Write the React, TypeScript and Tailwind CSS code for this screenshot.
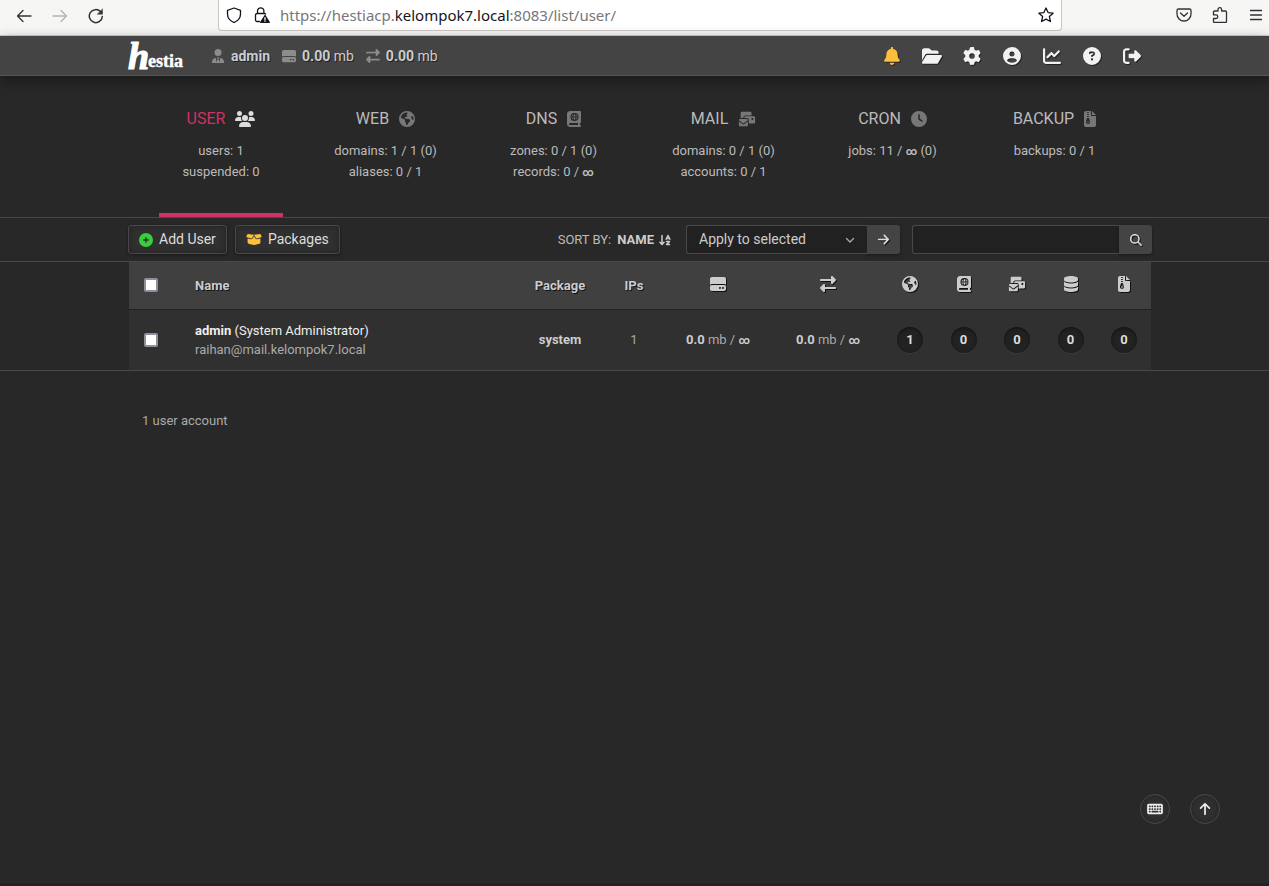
import type { ReactNode } from 'react';
import {
  FaArrowDownAZ, FaArrowRight, FaArrowUp, FaBell, FaBookAtlas, FaBoxOpen, FaChartLine,
  FaCirclePlus, FaCircleQuestion, FaCircleUser, FaClock, FaDatabase, FaEarthAmericas,
  FaEnvelopesBulk, FaFileZipper, FaFolderOpen, FaGear, FaHardDrive, FaKeyboard,
  FaMagnifyingGlass, FaRightFromBracket, FaRightLeft, FaUserTie, FaUsers,
} from 'react-icons/fa6';

const line = { fill: 'none', stroke: 'currentColor', strokeLinecap: 'round', strokeLinejoin: 'round' } as const;

function BrowserButton({ label, className = '', children }: { label: string; className?: string; children: ReactNode }) {
  return (
    <button type="button" aria-label={label} className={`flex size-5 shrink-0 items-center justify-center ${className}`}>
      <svg width="16" height="16" viewBox="0 0 16 16" {...line} strokeWidth="1.3">{children}</svg>
    </button>
  );
}

function BrowserBar() {
  return (
    <header className="flex h-9 border-b border-[#d0d0ce] bg-[#f6f6f5] text-[#2e3436]">
      <div className="flex w-[218px] shrink-0 gap-4 pt-1.5 pl-3.5">
        <BrowserButton label="Back"><path d="M15 8H1.5M7 2.5 1.5 8 7 13.5" /></BrowserButton>
        <BrowserButton label="Forward" className="text-[#b4b4b2]"><path d="M1 8h13.5M9 2.5 14.5 8 9 13.5" /></BrowserButton>
        <BrowserButton label="Reload"><path d="M14.3 8.5A6.5 6.5 0 1 1 12.5 3.6" strokeWidth="1.5" /><path d="M14.5 1.2v5h-5z" fill="currentColor" strokeWidth="0.5" /></BrowserButton>
      </div>
      <div className="flex h-[31px] min-w-0 flex-1 items-center gap-2 rounded-b border border-t-0 border-[#cbc6c2] bg-white px-[5px] text-[#15141a]">
        <BrowserButton label="Tracking protection"><path d="M8 1 14.5 3.3V7c0 4-2.6 6.9-6.5 8.5C4.1 13.9 1.5 11 1.5 7V3.3z" /></BrowserButton>
        <BrowserButton label="Connection not secure">
          <path d="M5.5 14.5H3A1.5 1.5 0 0 1 1.5 13V8A1.5 1.5 0 0 1 3 6.5h7.5A1.5 1.5 0 0 1 11.5 7M3.5 6.5V4a3.2 3.2 0 0 1 6.4 0v2.5" />
          <path d="m11 8.5 4.3 6.8H6.7z" fill="currentColor" /><path d="M11 10.6v2.2M11 14.2v.1" stroke="#fff" />
        </BrowserButton>
        <input aria-label="Address" className="sr-only" readOnly value="https://hestiacp.kelompok7.local:8083/list/user/" />
        <span className="flex-1 truncate font-['Noto_Sans',sans-serif] text-[15px] text-[#77767b]">
          https://hestiacp.<span className="text-[#15141a]">kelompok7.local</span>:8083/list/user/
        </span>
        <BrowserButton label="Bookmark this page"><path d="m8 1 2.1 4.6 5 .6-3.7 3.4 1 4.9L8 12.1l-4.4 2.4 1-4.9L.9 6.2l5-.6z" /></BrowserButton>
      </div>
      <div className="flex w-[207px] shrink-0 justify-end gap-4 pt-[5px] pr-[3px]">
        <BrowserButton label="Save to Pocket"><path d="M2.5 2h11A1.5 1.5 0 0 1 15 3.5V7A7 7 0 0 1 1 7V3.5A1.5 1.5 0 0 1 2.5 2zM4.5 6 8 9.3 11.5 6" /></BrowserButton>
        <BrowserButton label="Extensions"><path d="M6 4V2.5a1.8 1.8 0 0 1 3.6 0V4h3.9a1 1 0 0 1 1 1v9.5a1 1 0 0 1-1 1h-11a1 1 0 0 1-1-1v-3H4a1.8 1.8 0 0 0 0-3.6H1.5V5a1 1 0 0 1 1-1z" /></BrowserButton>
        <BrowserButton label="Menu"><path d="M2.5 3.5h11M2.5 8h11M2.5 12.5h11" /></BrowserButton>
      </div>
    </header>
  );
}

function Logo() {
  return (
    <a href="#home" aria-label="Hestia" className="flex h-8 w-[58px] items-center">
      <svg width="58" height="34" viewBox="0 0 58 34" className="overflow-visible" fill="#fff" stroke="#fff" strokeLinejoin="round" fontFamily="'Liberation Serif', serif" fontWeight="700">
        <text x="0" y="30" fontSize="38" fontStyle="italic" strokeWidth="1.2">h</text>
        <text x="20" y="28" fontSize="18" strokeWidth="0.4">estia</text>
      </svg>
    </a>
  );
}

const shortcuts = [
  { label: 'Notifications', icon: <FaBell className="text-[#ffbe3b]" /> },
  { label: 'File manager', icon: <FaFolderOpen className="w-5" /> },
  { label: 'Server settings', icon: <FaGear /> },
  { label: 'Account', icon: <FaCircleUser /> },
  { label: 'Statistics', icon: <FaChartLine /> },
  { label: 'Help', icon: <FaCircleQuestion /> },
  { label: 'Log out', icon: <FaRightFromBracket /> },
];

function TopBar() {
  return (
    <div className="h-10 border-b border-[#555] bg-[#444] pl-[11px] shadow-[0_4px_14px_rgba(0,0,0,0.4)]">
      <div className="mx-auto flex h-full w-full max-w-[1024px] items-center">
        <Logo />
        <div className="ml-[25px] flex items-center gap-3 pt-px text-[14px] text-[#ccc] [text-shadow:1px_1px_0_#222] [&_svg]:size-3.5 [&_svg]:text-[#8c8c8c]">
          <span className="flex items-center gap-1.5"><FaUserTie /><b>admin</b></span>
          <span className="flex items-center gap-1.5"><FaHardDrive /><span><b>0.00</b> mb</span></span>
          <span className="flex items-center gap-1.5"><FaRightLeft /><span><b>0.00</b> mb</span></span>
        </div>
        <nav className="ml-auto flex text-[18px] text-[#f2f2f2]">
          {shortcuts.map((s) => (
            <a key={s.label} href="#shortcut" aria-label={s.label} className="flex h-9 w-10 items-center justify-center drop-shadow-[1px_1px_0_#222]">{s.icon}</a>
          ))}
        </nav>
      </div>
    </div>
  );
}

const inf = <b className="text-[11px] leading-none">∞</b>;
const tabs: { name: string; icon: ReactNode; lines: ReactNode[] }[] = [
  { name: 'USER', icon: <FaUsers className="h-4 w-5" />, lines: ['users: 1', 'suspended: 0'] },
  { name: 'WEB', icon: <FaEarthAmericas className="size-4" />, lines: ['domains: 1 / 1 (0)', 'aliases: 0 / 1'] },
  { name: 'DNS', icon: <FaBookAtlas className="h-4 w-3.5" />, lines: ['zones: 0 / 1 (0)', <>records: 0 / {inf}</>] },
  { name: 'MAIL', icon: <FaEnvelopesBulk className="h-4 w-[18px]" />, lines: ['domains: 0 / 1 (0)', 'accounts: 0 / 1'] },
  { name: 'CRON', icon: <FaClock className="size-4" />, lines: [<>jobs: 11 / {inf} (0)</>] },
  { name: 'BACKUP', icon: <FaFileZipper className="h-4 w-3" />, lines: ['backups: 0 / 1'] },
];

function Tabs() {
  return (
    <nav className="border-b border-[#484848] pl-[11px]">
      <div className="mx-auto grid w-full max-w-[1024px] grid-cols-[124px_143px_131px_147px_129px_133px] justify-evenly">
        {tabs.map((t, i) => (
          <a key={t.name} href="#tab" className={`flex h-[141px] flex-col items-center border-b-4 pt-[31px] ${i === 0 ? 'border-[#cf3264]' : 'border-transparent'}`}>
            <span className={`flex h-6 items-center gap-2.5 text-[16px] ${i === 0 ? 'text-[#cf3264]' : 'text-[#bbb]'}`}>
              {t.name}
              <span className={i === 0 ? 'text-[#ddd]' : 'text-[#777]'}>{t.icon}</span>
            </span>
            <span className="mt-[9px] text-center text-[13px] leading-[21px] whitespace-nowrap text-[#bbb]">
              {t.lines.map((l, n) => <span key={n} className="block">{l}</span>)}
            </span>
          </a>
        ))}
      </div>
    </nav>
  );
}

const toolButton = 'flex h-[29px] items-center gap-1.5 rounded-[3px] border border-[#484848] bg-[#303030] px-2.5 text-[14px] text-[#ddd] shadow-[inset_0_0_6px_rgba(0,0,0,0.3),0_1px_3px_rgba(0,0,0,0.4)]';

function Toolbar() {
  return (
    <div className="border-b border-[#484848] pl-[11px]">
      <div className="mx-auto flex h-[43px] w-full max-w-[1024px] items-center">
        <a href="#add" className={toolButton}><FaCirclePlus className="text-[#37d03b]" />Add User</a>
        <a href="#packages" className={`ml-2 ${toolButton}`}><FaBoxOpen className="h-[13px] w-4 text-[#ffbe3b]" />Packages</a>
        <button type="button" className="ml-auto flex items-center gap-1.5 text-[13px] text-[#bbb]">
          SORT BY:<b className="flex items-center gap-1 text-[#ccc]">NAME <FaArrowDownAZ className="h-3 w-3.5" /></b>
        </button>
        <form className="ml-3.5 flex" onSubmit={(e) => e.preventDefault()}>
          <div className="relative">
            <select aria-label="Bulk action" className="h-[29px] w-[181px] appearance-none rounded-l-[3px] border border-r-0 border-[#484848] bg-[#212121] pl-3 text-[14px] text-[#ccc]">
              <option>Apply to selected</option>
            </select>
            <svg className="pointer-events-none absolute top-3 right-3" width="10" height="7" viewBox="0 0 10 7" {...line} stroke="#aaa" strokeWidth="1.3"><path d="m1.5 1.5 3.5 3.5 3.5-3.5" /></svg>
          </div>
          <button type="submit" aria-label="Apply" className="flex h-[29px] w-[33px] items-center justify-center rounded-r-[3px] bg-[#444] text-[13px] text-[#ddd] shadow-[0_1px_3px_rgba(0,0,0,0.4)]"><FaArrowRight className="drop-shadow-[1px_1px_0_#111]" /></button>
        </form>
        <form className="ml-3 flex" onSubmit={(e) => e.preventDefault()}>
          <input type="search" aria-label="Search" className="h-[29px] w-[207px] rounded-l-[3px] border border-r-0 border-[#484848] bg-[#212121] px-2 text-[14px] text-[#ccc]" />
          <button type="submit" aria-label="Search" className="flex h-[29px] w-[33px] items-center justify-center rounded-r-[3px] bg-[#444] text-[12px] text-[#ddd] shadow-[0_1px_3px_rgba(0,0,0,0.4)]"><FaMagnifyingGlass className="drop-shadow-[1px_1px_0_#111]" /></button>
        </form>
      </div>
    </div>
  );
}

function Check({ label }: { label: string }) {
  return <input type="checkbox" aria-label={label} className="block size-3.5 appearance-none rounded-[2px] border-2 border-[#8f8f9d] bg-white" />;
}

const columns = [
  { label: 'Disk', icon: <FaHardDrive className="size-4" /> },
  { label: 'Bandwidth', icon: <FaRightLeft className="size-4" /> },
  { label: 'Web domains', icon: <FaEarthAmericas className="size-4" /> },
  { label: 'DNS domains', icon: <FaBookAtlas className="size-4" /> },
  { label: 'Mail domains', icon: <FaEnvelopesBulk className="h-4 w-[18px]" /> },
  { label: 'Databases', icon: <FaDatabase className="size-4" /> },
  { label: 'Backups', icon: <FaFileZipper className="size-4" /> },
];

function UserTable() {
  return (
    <div className="border-b border-[#484848] pl-[11px]">
      <table className="mx-auto w-full max-w-[1022px] table-fixed text-center text-[13px] text-[#ccc]">
        <colgroup>
          <col className="w-[51px]" /><col /><col className="w-[90px]" /><col className="w-[58px]" />
          <col className="w-[110px]" /><col className="w-[110px]" /><col className="w-[54px]" />
          <col className="w-[53px]" /><col className="w-[54px]" /><col className="w-[53px]" /><col className="w-[54px]" />
        </colgroup>
        <thead>
          <tr className="h-[47px] border-b border-[#222] bg-[#404040] [text-shadow:1px_1px_0_#111]">
            <th className="pl-[15px]"><Check label="Select all" /></th>
            <th className="pl-[15px] text-left">Name</th><th>Package</th><th>IPs</th>
            {columns.map((c) => <th key={c.label} aria-label={c.label} className="pb-0.5 [&>svg]:mx-auto [&>svg]:drop-shadow-[1px_1px_0_#111]">{c.icon}</th>)}
          </tr>
        </thead>
        <tbody>
          <tr className="h-[61px] bg-[#303030]">
            <td className="pl-[15px]"><Check label="Select admin" /></td>
            <td className="pl-[15px] text-left leading-[19px]">
              <a href="#admin" className="block text-[#eee]"><b>admin</b> (System Administrator)</a>
              <span className="block text-[#aaa]">raihan@mail.kelompok7.local</span>
            </td>
            <td><b>system</b></td><td className="text-[#aaa]">1</td>
            <td><b>0.0</b> <span className="text-[#aaa]">mb /</span> {inf}</td>
            <td><b>0.0</b> <span className="text-[#aaa]">mb /</span> {inf}</td>
            {['1', '0', '0', '0', '0'].map((v, i) => (
              <td key={i}><b className="mx-auto flex size-[26px] items-center justify-center rounded-full bg-[#222] text-[#ddd] shadow-[inset_0_1px_3px_#111,0_1px_0_#3a3a3a]">{v}</b></td>
            ))}
          </tr>
        </tbody>
      </table>
    </div>
  );
}

const roundButton = 'flex size-[30px] items-center justify-center rounded-full border border-[#484848] bg-[#303030] text-[14px] text-[#eee] shadow-[inset_0_0_6px_rgba(0,0,0,0.3)]';

export default function App() {
  return (
    <div className="flex min-h-screen flex-col border-b-3 border-[#241f22] bg-[#282828] font-[Roboto,sans-serif]">
      <BrowserBar />
      <TopBar />
      <main>
        <Tabs />
        <Toolbar />
        <UserTable />
        <div className="pl-[11px]">
          <p className="mx-auto w-full max-w-[1024px] px-3.5 pt-10 text-[13px] leading-5 text-[#aaa]">1 user account</p>
        </div>
      </main>
      <div className="fixed right-[49px] bottom-[62px] flex gap-5">
        <button type="button" aria-label="Keyboard shortcuts" className={roundButton}><FaKeyboard className="w-4" /></button>
        <button type="button" aria-label="Back to top" className={roundButton}><FaArrowUp /></button>
      </div>
    </div>
  );
}
